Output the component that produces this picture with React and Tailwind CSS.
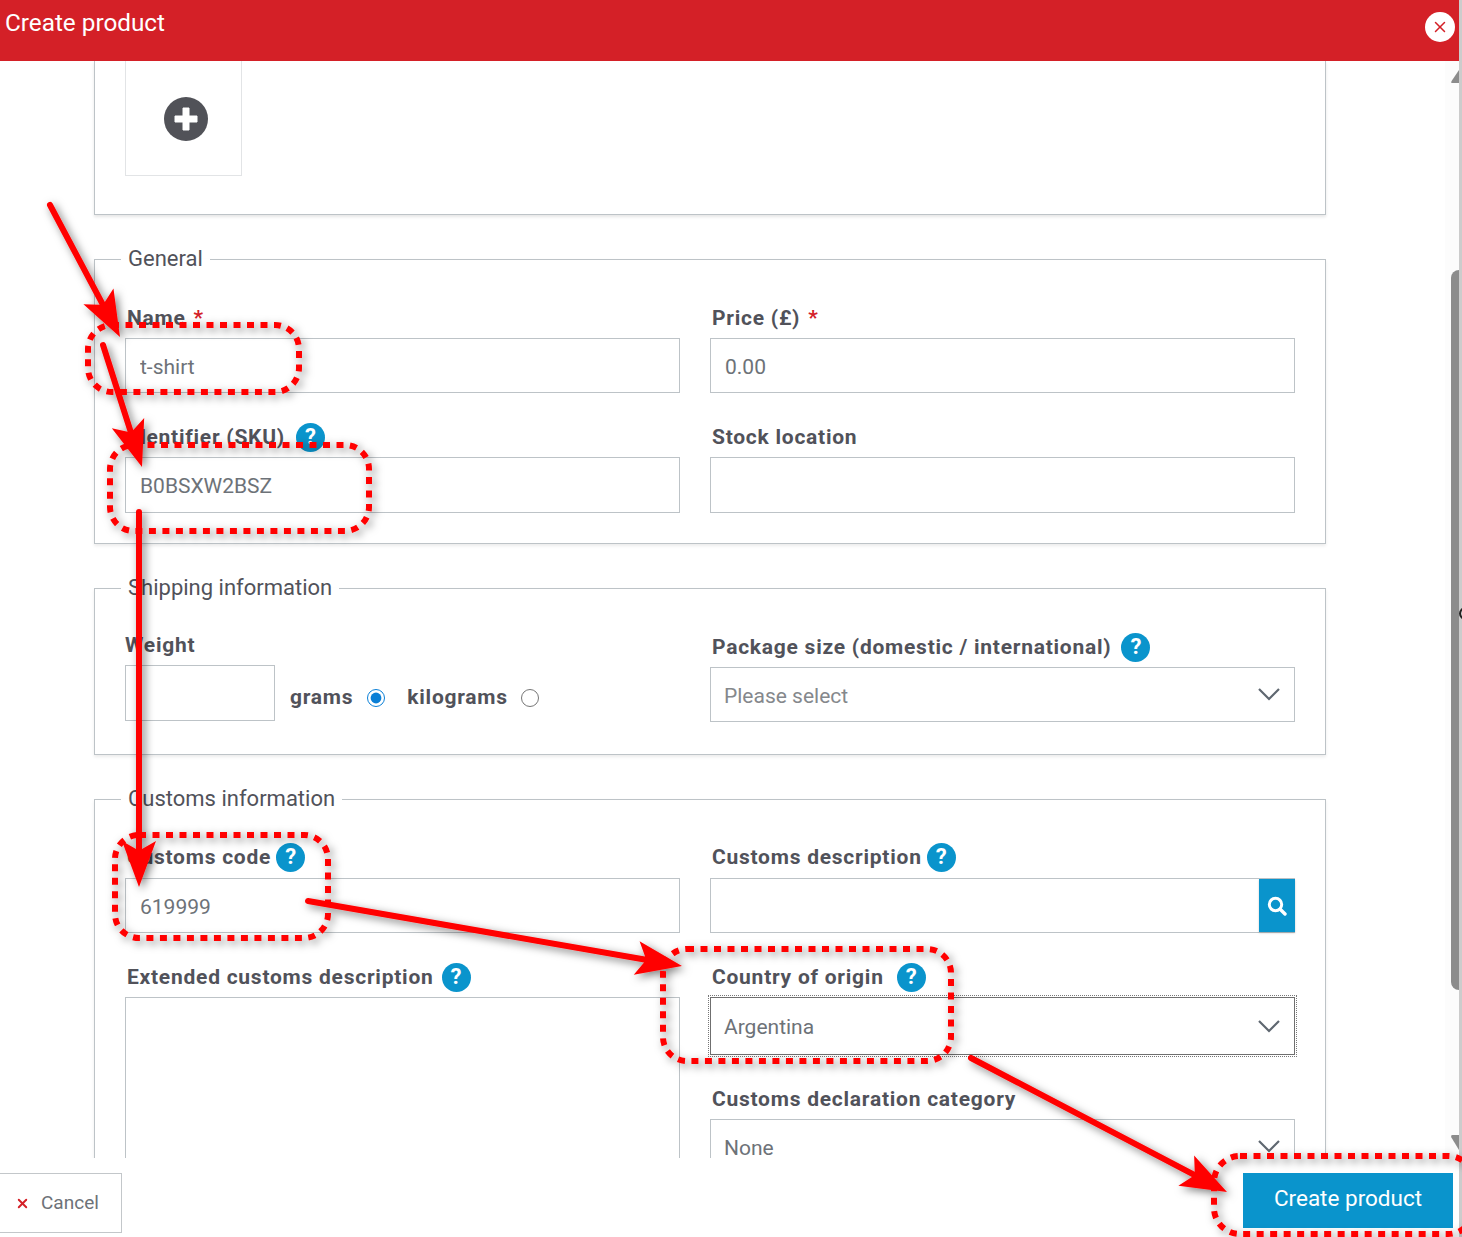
import { X } from 'lucide-react';

const labelCls = "pl-[2px] text-[21px] leading-[28px] font-bold tracking-[0.75px] text-[#51525a] flex items-center";
const inputCls = "w-full h-[55px] border border-[#bdc3c7] px-[14px] pt-[2px] text-[21px] text-[#6d7278] bg-white outline-none";

function Help({ className = "" }) {
  return (
    <span className={`inline-flex items-center justify-center w-[29px] h-[29px] rounded-full bg-[#0a94cc] text-white text-[22px] font-bold leading-none tracking-normal ${className}`}>?</span>
  );
}

function Field({ label, required, help, helpGap = "ml-[8px]", className = "", children }) {
  return (
    <div className={className}>
      <div className={`${labelCls} h-[28px] mb-[6px]`}>
        {label}
        {required && <span className="ml-[8px] text-[#d42027]">*</span>}
        {help && <Help className={helpGap} />}
      </div>
      {children}
    </div>
  );
}

function SelectBox({ value, focused, muted, className = "" }) {
  return (
    <div className={`h-[55px] flex items-center justify-between pl-[13px] pr-[14px] bg-white text-[21px] ${muted ? 'text-[#85888c]' : 'text-[#6d7278]'} ${focused ? 'border border-[#6f6f6f] outline-1 outline-dotted outline-offset-1 outline-[#777]' : 'border border-[#bdc3c7]'} ${className}`}>
      <span className="pt-[2px] leading-[18px]">{value}</span>
      <svg width="22" height="13" viewBox="0 0 22 13" fill="none" stroke="#5f6770" strokeWidth="2.2"><path d="M1 1l10 10L21 1" /></svg>
    </div>
  );
}

function Section({ title, className = "", children }) {
  return (
    <fieldset className={`mx-[94px] w-[1232px] border border-[#bdc3c7] px-[30px] shadow-[0_2px_3px_rgba(0,0,0,0.08)] ${className}`}>
      <legend className="ml-[-4px] px-[7px] text-[22px] leading-[28px] text-[#51525a]">{title}</legend>
      {children}
    </fieldset>
  );
}

// annotation helpers, the red marks lie over the form
function Arrow({ x1, y1, x2, y2 }) {
  const len = Math.hypot(x2 - x1, y2 - y1);
  const ux = (x2 - x1) / len;
  const uy = (y2 - y1) / len;
  const px = -uy;
  const py = ux;
  const bx = x2 - ux * 46;
  const by = y2 - uy * 46;
  const nx = x2 - ux * 38;
  const ny = y2 - uy * 38;
  const pts = [
    [x2, y2],
    [bx + px * 17, by + py * 17],
    [nx + px * 3, ny + py * 3],
    [nx - px * 3, ny - py * 3],
    [bx - px * 17, by - py * 17],
  ].map(p => p.join(',')).join(' ');
  return (
    <g>
      <line x1={x1} y1={y1} x2={nx} y2={ny} stroke="#ff0000" strokeWidth="6" strokeLinecap="round" />
      <polygon points={pts} fill="#ff0000" />
    </g>
  );
}

function Annotations() {
  const rects = [
    [88, 325, 211, 67, 24],
    [110, 445, 259, 86, 24],
    [115, 835, 213, 103, 24],
    [663, 949, 288, 112, 24],
    [1214, 1156, 260, 78, 26],
  ];
  return (
    <svg width="1462" height="1237" className="absolute top-0 left-0 pointer-events-none">
      <defs>
        <filter id="markShadow" x="-20%" y="-20%" width="140%" height="140%">
          <feDropShadow dx="3" dy="3" stdDeviation="4" floodColor="#000" floodOpacity="0.5" />
        </filter>
      </defs>
      <g filter="url(#markShadow)">
        {rects.map(([x, y, w, h, r]) => (
          <rect key={x} x={x} y={y} width={w} height={h} rx={r} fill="none" stroke="#ff0000" strokeWidth="6" strokeDasharray="7 6.5" />
        ))}
        <Arrow x1={50} y1={205} x2={120} y2={337} />
        <Arrow x1={103} y1={345} x2={142} y2={467} />
        <Arrow x1={139} y1={512} x2={139} y2={887} />
        <Arrow x1={308} y1={901} x2={682} y2={966} />
        <Arrow x1={971} y1={1058} x2={1227} y2={1192} />
      </g>
    </svg>
  );
}

export default function App() {
  return (
    <div className="relative w-[1462px] h-[1237px] overflow-hidden bg-white flex font-['Roboto',sans-serif]">
      <div className="w-[1459px] h-full flex flex-col">
        {/* Cabecera */}
        <div className="h-[61px] shrink-0 bg-[#d42027] flex justify-between pl-[5px] pr-[4px] pt-[8px]">
          <h1 className="text-[24.3px] leading-[30px] text-white">Create product</h1>
          <button className="w-[30px] h-[30px] mt-[4px] rounded-full bg-white flex items-center justify-center text-[#d42027]">
            <X size={18} strokeWidth={2} />
          </button>
        </div>

        <div className="h-[1097px] shrink-0 flex overflow-hidden">
          <div className="w-[1445px] shrink-0 overflow-hidden">
            {/* Imagenes */}
            <div className="mx-[94px] w-[1232px] h-[154px] border-x border-b border-[#bdc3c7] pl-[30px] shadow-[0_2px_3px_rgba(0,0,0,0.1)]">
              <div className="w-[117px] h-[115px] border-x border-b border-[#e2e4e6] flex items-center justify-center">
                <div className="ml-[5px] mt-[2px] w-[44px] h-[44px] rounded-full bg-[#515258] flex items-center justify-center">
                  <svg width="28" height="28" viewBox="0 0 28 28"><path d="M11 3h6v8h8v6h-8v8h-6v-8H3v-6h8z" fill="#fff" stroke="#fff" strokeLinejoin="round" /></svg>
                </div>
              </div>
            </div>

            {/* General */}
            <Section title="General" className="mt-[30px] h-[299px]">
              <div className="grid grid-cols-[555px_585px] gap-x-[30px] gap-y-[30px] pt-[31px]">
                <Field label="Name" required><input className={inputCls} defaultValue="t-shirt" /></Field>
                <Field label="Price (£)" required><input className={inputCls} defaultValue="0.00" /></Field>
                <Field label="Identifier (SKU)" help helpGap="ml-[11px]"><input className={`${inputCls} h-[56px]`} defaultValue="B0BSXW2BSZ" /></Field>
                <Field label="Stock location"><input className={`${inputCls} h-[56px]`} /></Field>
              </div>
            </Section>

            {/* Shipping */}
            <Section title="Shipping information" className="mt-[30px] h-[181px]">
              <div className="grid grid-cols-[555px_585px] gap-x-[30px] pt-[29px]">
                <div>
                  <div className="h-[28px] mb-[6px] text-[21px] leading-[28px] font-bold tracking-[0.75px] text-[#51525a]">Weight</div>
                  <div className="flex items-center text-[21px] font-bold tracking-[0.75px] text-[#51525a]">
                    <input className="w-[150px] h-[56px] border border-[#bdc3c7] outline-none" />
                    <span className="ml-[15px] mt-[9px]">grams</span>
                    <input type="radio" name="unit" defaultChecked className="ml-[14px] mt-[10px] w-[18px] h-[18px] accent-[#0a7fd6]" />
                    <span className="ml-[22px] mt-[9px]">kilograms</span>
                    <input type="radio" name="unit" className="ml-[13px] mt-[10px] w-[18px] h-[18px]" />
                  </div>
                </div>
                <Field label={<span>Package size (domestic / international)</span>} help helpGap="ml-[10px]" className="mt-[2px]">
                  <SelectBox value="Please select" muted />
                </Field>
              </div>
            </Section>

            {/* Customs */}
            <Section title="Customs information" className="mt-[30px] h-[500px]">
              <div className="grid grid-cols-[555px_585px] gap-x-[30px] pt-[30px]">
                <div>
                  <Field label="Customs code" help helpGap="ml-[5px]" className="[&>div]:mb-[7px]"><input className={inputCls} defaultValue="619999" /></Field>
                  <Field label="Extended customs description" help className="mt-[30px]">
                    <textarea className="block w-full h-[300px] border border-[#bdc3c7] resize-none outline-none" />
                  </Field>
                </div>
                <div>
                  <Field label="Customs description" help helpGap="ml-[5px]" className="[&>div]:mb-[7px]">
                    <div className="flex h-[55px] border border-[#bdc3c7] border-r-0">
                      <input className="flex-1 min-w-0 outline-none" />
                      <button className="w-[36px] bg-[#0a94cc] flex items-center justify-center shadow-[0_1px_2px_rgba(0,0,0,0.2)]">
                        <svg width="20" height="20" viewBox="0 0 20 20" fill="none" stroke="#fff">
                          <circle cx="8.5" cy="8.5" r="6.2" strokeWidth="3" />
                          <path d="M13.2 13.2 18 18" strokeWidth="3.4" strokeLinecap="round" />
                        </svg>
                      </button>
                    </div>
                  </Field>
                  <Field label="Country of origin" help helpGap="ml-[13px]" className="mt-[30px]">
                    <SelectBox value="Argentina" focused className="h-[58px]" />
                  </Field>
                  <Field label="Customs declaration category" className="mt-[30px]">
                    <SelectBox value="None" />
                  </Field>
                </div>
              </div>
            </Section>
          </div>

          {/* Scrollbar */}
          <div className="w-[14px] shrink-0 bg-[#fcfcfc] flex flex-col items-end overflow-hidden">
            <svg width="8" height="13" viewBox="0 0 8 13" className="mt-[9px] shrink-0"><path d="M8 0V13H1.5Q-0.5 13 0.6 11z" fill="#8c8c8c" /></svg>
            <div className="mt-[187px] w-[8px] h-[720px] shrink-0 rounded-tl-[8px] rounded-bl-[8px] bg-[#8c8c8c]" />
            <svg width="8" height="15" viewBox="0 0 8 15" className="mt-[145px] shrink-0"><path d="M1.5 0H8V15L0.4 2.4Q-0.5 0 1.5 0z" fill="#8c8c8c" /></svg>
          </div>
        </div>

        {/* Pie */}
        <div className="flex-1 flex justify-between items-start pt-[15px] pr-[6px]">
          <button className="w-[122px] h-[60px] border border-l-0 border-[#c3c7ca] flex items-center pl-[15px] text-[19px] text-[#6d7278]">
            <X size={15} strokeWidth={3} className="text-[#d42027] mr-[11px]" />
            Cancel
          </button>
          <button className="w-[210px] h-[55px] pb-[3px] bg-[#0a94cc] text-white text-[22.5px]">Create product</button>
        </div>
      </div>
      <div className="w-[3px] h-full bg-[#cccccc] pt-[607px] overflow-hidden">
        <div className="w-[13px] h-[13px] rounded-full border-2 border-[#222]" />
      </div>

      <Annotations />
    </div>
  );
}
